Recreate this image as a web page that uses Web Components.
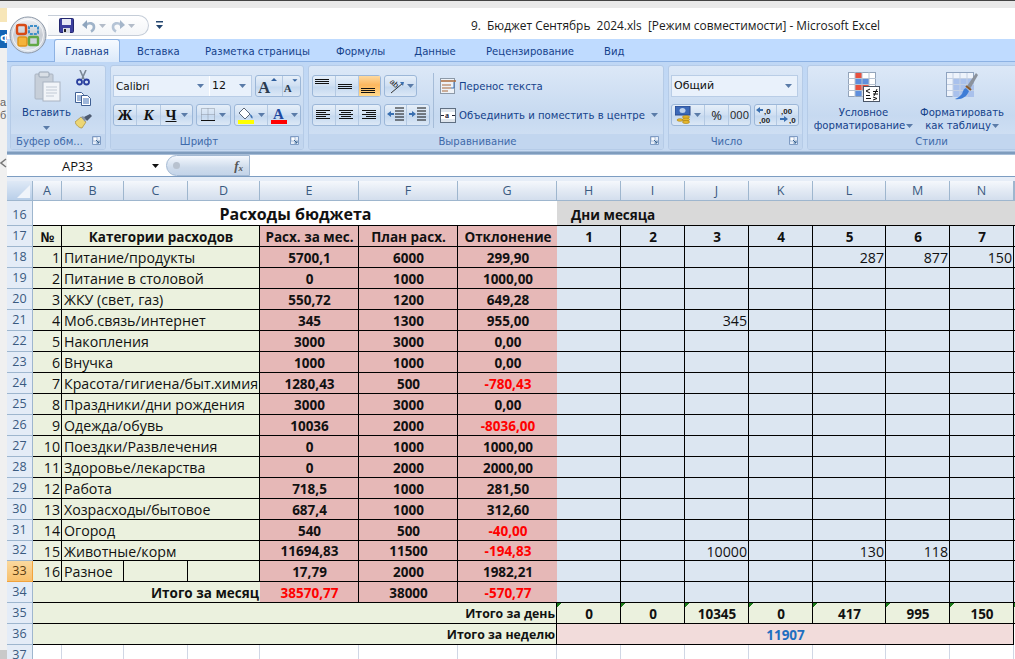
<!DOCTYPE html>
<html lang="ru">
<head>
<meta charset="utf-8">
<title>Excel</title>
<style>
  html, body { margin: 0; height: 100%; overflow: hidden; background: #efefef; }
</style>
</head>
<body>
<xl-app></xl-app>
<script>
const UI_FONT = '"DejaVu Sans", sans-serif';
const CELL_FONT = '"Open Sans", sans-serif';

const arrow = (c = '#5a7ba8') => `<svg width="7" height="4" viewBox="0 0 7 4"><path d="M0 0h7L3.5 4z" fill="${c}"/></svg>`;

// text alignment glyphs, rows = [x, width] at fixed y steps
const lines = (rows, y0, step, c = '#111') => `<svg width="18" height="16" viewBox="0 0 18 16">${rows.map((r, i) =>
  `<rect x="${r[0]}" y="${y0 + i * step}" width="${r[1]}" height="1" fill="${c}"/>`).join('')}</svg>`;

const curved = (stroke, head) => `<path d="M4 6C7 3 12 4 12 8c0 2-1 3.500-3 4.500" fill="none" stroke="${stroke}" stroke-width="2.600"/><path d="M5 1v9L0 6z" fill="${head}"/>`;

const icons = {
  save: `<svg width="15" height="15" viewBox="0 0 15 15"><rect x=".5" y=".5" width="14" height="14" rx="1" fill="#3b3f9e" stroke="#23276e"/><rect x="3" y="1" width="9" height="6" fill="#e6e9f5"/><rect x="4" y="10" width="7" height="5" fill="#d7dbe6"/><rect x="5" y="11" width="2" height="3" fill="#222"/></svg>`,
  undo: `<svg width="14" height="14" viewBox="0 0 14 14">${curved('#9fb3c9', '#8fa5be')}</svg>`,
  redo: `<svg width="14" height="14" viewBox="0 0 14 14"><g transform="matrix(-1 0 0 1 14 0)">${curved('#b5c4d6', '#a5b6ca')}</g></svg>`,
  qat: `<svg width="7" height="9" viewBox="0 0 7 9"><rect x="0" y="0" width="7" height="1.500" fill="#24466f"/><path d="M0 4h7L3.500 8z" fill="#24466f"/></svg>`,
  paste: `<svg width="27" height="31" viewBox="0 0 27 31"><rect x="1" y="3" width="18" height="25" rx="1" fill="#c7cfd9" stroke="#aab4c2"/><rect x="5" y="1" width="10" height="5" rx="1" fill="#d9dfe6" stroke="#9aa6b5"/><rect x="9" y="11" width="17" height="19" fill="#f1f4f8" stroke="#aab4c2"/><path d="M12 16h11M12 19h11M12 22h11M12 25h8" stroke="#c2cad5"/></svg>`,
  scissors: `<svg width="14" height="16" viewBox="0 0 14 16"><path d="M4 0l4 9M10 0L6 9" stroke="#7b8795" stroke-width="1.600"/><circle cx="3.500" cy="12" r="2.500" fill="none" stroke="#2a3f9e" stroke-width="1.800"/><circle cx="10.500" cy="12" r="2.500" fill="none" stroke="#2a3f9e" stroke-width="1.800"/></svg>`,
  copy: `<svg width="16" height="14" viewBox="0 0 16 14"><path d="M.5.500h6l2 2v8h-8z" fill="#fff" stroke="#3f5f93"/><path d="M6.500 3.500h6l3 3v7h-9z" fill="#fff" stroke="#3f5f93"/><path d="M2 4h4M2 6h4M2 8h4M8 7h6M8 9h6M8 11h6" stroke="#3f6fb5"/></svg>`,
  brush: `<svg width="17" height="15" viewBox="0 0 17 15"><path d="M0 8l6-5 5 5-4 6c-3 0-6-3-7-6z" fill="#ecd675" stroke="#a68a35" stroke-width=".7"/><path d="M6 3l2-1 3 3-1 3z" fill="#8b97a8"/><path d="M9 3l6-3 2 2-5 5z" fill="#4d5a70"/></svg>`,
  grow: `<svg width="22" height="18" viewBox="0 0 22 18"><text x="0" y="16" font-family="Liberation Serif" font-weight="700" font-size="17" fill="#2b3b4f">A</text><path d="M13 4l3-3 3 3z" fill="#2f5f9e"/></svg>`,
  shrink: `<svg width="20" height="18" viewBox="0 0 20 18"><text x="1" y="16" font-family="Liberation Serif" font-weight="700" font-size="13" fill="#2b3b4f">A</text><path d="M11 1h6l-3 3z" fill="#2f5f9e"/></svg>`,
  borders: `<svg width="14" height="14" viewBox="0 0 14 14"><path d="M.5 .5h13v12h-13zM7 .5v12M.5 6.500h13" fill="none" stroke="#8a94a3" stroke-dasharray="1 1"/><rect x="0" y="12" width="14" height="1" fill="#111"/></svg>`,
  fill: `<svg width="16" height="17" viewBox="0 0 16 17"><path d="M6 1l6 6-5 5-6-6z" fill="#fff" stroke="#5a6678"/><path d="M12 7c2 1 3 3 2.500 4.500-1 0-2.500-2-2.500-4.500z" fill="#3a6fb0"/><rect x="0" y="13" width="16" height="4" fill="#ffff00"/></svg>`,
  color: `<svg width="16" height="17" viewBox="0 0 16 17"><text x="2" y="12" font-family="Liberation Serif" font-weight="700" font-size="15" fill="#1f4aa0">A</text><rect x="0" y="13" width="16" height="4" fill="#ff0000"/></svg>`,
  orient: `<svg width="18" height="16" viewBox="0 0 18 16"><text transform="rotate(45 7 7)" x="1" y="9" font-family="Liberation Sans" font-size="8" fill="#222">ab</text><path d="M3 15L15 5" stroke="#333"/><path d="M12 4l4 0-1 4z" fill="#3a6fb0"/></svg>`,
  indentL: `<svg width="18" height="16" viewBox="0 0 18 16"><path d="M8 1h9M8 4h9M8 7h9M8 10h9M8 13h9" stroke="#111" fill="none"/><path d="M0 7l4-3v2h3v2H4v2z" fill="#3a6fb0"/></svg>`,
  indentR: `<svg width="18" height="16" viewBox="0 0 18 16"><path d="M8 1h9M8 4h9M8 7h9M8 10h9M8 13h9" stroke="#111" fill="none"/><path d="M7 7L3 4v2H0v2h3v2z" fill="#3a6fb0"/></svg>`,
  wrap: `<svg width="17" height="16" viewBox="0 0 17 16"><rect x=".5" y=".5" width="14" height="15" fill="#eef2f7" stroke="#8c99a8"/><path d="M1 3h15" stroke="#a8683a" stroke-width="1.500"/><path d="M2 7h9M2 10h9M2 13h6" stroke="#a8683a"/><path d="M14 4v6h-3" fill="none" stroke="#3a6fb0"/></svg>`,
  merge: `<svg width="16" height="15" viewBox="0 0 16 15"><rect x=".5" y=".5" width="15" height="14" fill="#dfe6ee" stroke="#5f6f82"/><rect x="1" y="4" width="14" height="7" fill="#fff"/><text x="5" y="10" font-family="Liberation Serif" font-weight="700" font-size="8" fill="#223">a</text><path d="M1 7.500h3M12 7.500h3" stroke="#223"/></svg>`,
  money: `<svg width="16" height="18" viewBox="0 0 16 18"><rect x="0" y="0" width="15" height="9" fill="#3c69b8" stroke="#28488a"/><ellipse cx="7.500" cy="4.500" rx="3" ry="2.500" fill="#bcd0ec"/><ellipse cx="11" cy="11" rx="3.500" ry="1.500" fill="#e8b92e" stroke="#a67d10" stroke-width=".6"/><ellipse cx="11" cy="13.500" rx="3.500" ry="1.500" fill="#e8b92e" stroke="#a67d10" stroke-width=".6"/><ellipse cx="11" cy="16" rx="3.500" ry="1.500" fill="#e8b92e" stroke="#a67d10" stroke-width=".6"/><ellipse cx="5" cy="14" rx="3" ry="1.300" fill="#e8b92e" stroke="#a67d10" stroke-width=".6"/></svg>`,
  decUp: `<svg width="19" height="18" viewBox="0 0 19 18"><path d="M0 4l4-3v2h3v2H4v2z" fill="#3a6fb0"/><text x="8" y="8" font-family="Liberation Sans" font-size="8" font-weight="700" fill="#222">,0</text><text x="3" y="17" font-family="Liberation Sans" font-size="8" font-weight="700" fill="#222">,00</text></svg>`,
  decDown: `<svg width="19" height="18" viewBox="0 0 19 18"><text x="3" y="8" font-family="Liberation Sans" font-size="8" font-weight="700" fill="#222">,00</text><path d="M9 13l-4-3v2H1v2h4v2z" transform="translate(1 0)" fill="#3a6fb0"/><text x="11" y="17" font-family="Liberation Sans" font-size="8" font-weight="700" fill="#222">,0</text></svg>`,
  launcher: `<svg width="9" height="9" viewBox="0 0 9 9"><path d="M.5 .5h8v8h-8z" fill="#e6eef9" stroke="#7f9cc4"/><path d="M1 1h4v4H1z" fill="#fff" stroke="#7f9cc4" stroke-width=".6"/><path d="M4 4l3 3M7 4.500V7H4.500" fill="none" stroke="#35608f"/></svg>`,
  condFormat: `<svg width="32" height="30" viewBox="0 0 32 30"><rect x=".5" y=".5" width="27" height="24" fill="#fff" stroke="#93a4ba"/><rect x="7" y="1" width="7" height="6" fill="#e8513f"/><rect x="7" y="7" width="14" height="6" fill="#5f8fdd"/><rect x="7" y="13" width="14" height="6" fill="#e8513f"/><rect x="7" y="19" width="7" height="5" fill="#5f8fdd"/><path d="M7 0v25M14 0v25M21 0v25M0 6.500h28M0 12.500h28M0 18.500h28" stroke="#b6c2d2" fill="none"/><rect x="15.500" y="14.500" width="16" height="15" fill="#fff" stroke="#4a5566"/><path d="M22 17l-4 2 4 2M18 23.500h4M18 26.500h5M25 19.500h5M25 22h5M29 17l-3 7M25 25l4 1.500-4 1.500" stroke="#111" fill="none"/></svg>`,
  tableFormat: `<svg width="32" height="30" viewBox="0 0 32 30"><rect x=".5" y=".5" width="27" height="24" fill="#eef3fb" stroke="#8fa3bf"/><rect x="7" y="7" width="21" height="18" fill="#a9c1ec"/><path d="M7 1v24M14 1v24M21 1v24M1 6.500h27M1 12.500h27M1 18.500h27" stroke="#c3d0e4" fill="none"/><path d="M30 1L21 14l3 3L32 3z" fill="#8b929c"/><path d="M20 16c-3 1-3 4-4 6-2 2-4 4-7 5 6 1 12-2 14-8z" fill="#3f7dd6"/><path d="M20 14l5 4" stroke="#8a5a2b" stroke-width="2.200"/></svg>`,
  cellStyle: `<svg width="32" height="30" viewBox="0 0 32 30"><rect x=".5" y=".5" width="27" height="24" fill="#fff" stroke="#93a4ba"/></svg>`
};

const orb = `<svg width="38" height="38" viewBox="0 0 38 38">
  <defs>
    <linearGradient id="o" x1="0" y1="0" x2="0" y2="1"><stop offset="0" stop-color="#f4f5f7"/><stop offset=".5" stop-color="#c8ccd3"/><stop offset="1" stop-color="#dfe6ef"/></linearGradient>
  </defs>
  <circle cx="19" cy="19" r="18" fill="url(#o)" stroke="#8a96a6"/>
  <circle cx="19" cy="19" r="15.500" fill="none" stroke="#fff" stroke-opacity=".7"/>
  <rect x="8" y="9" width="9" height="9" rx="2" fill="none" stroke="#d84a14" stroke-width="2.400"/>
  <rect x="20" y="10" width="9" height="8" rx="1" fill="none" stroke="#3f8fc9" stroke-width="2" stroke-dasharray="3 1"/>
  <rect x="9" y="21" width="9" height="9" rx="2" fill="#f4b33a" stroke="#e0941a" stroke-width="1.500"/>
  <rect x="20" y="21" width="9" height="8" rx="1" fill="none" stroke="#62a845" stroke-width="2.400"/>
</svg>`;

// row data: num, name, month, plan, diff, {col: value}
const ROWS = [
  [1, 'Питание/продукты', '5700,1', '6000', '299,90', { L: 287, M: 877, N: 150 }],
  [2, 'Питание в столовой', '0', '1000', '1000,00'],
  [3, 'ЖКУ (свет, газ)', '550,72', '1200', '649,28'],
  [4, 'Моб.связь/интернет', '345', '1300', '955,00', { J: 345 }],
  [5, 'Накопления', '3000', '3000', '0,00'],
  [6, 'Внучка', '1000', '1000', '0,00'],
  [7, 'Красота/гигиена/быт.химия', '1280,43', '500', '-780,43'],
  [8, 'Праздники/дни рождения', '3000', '3000', '0,00'],
  [9, 'Одежда/обувь', '10036', '2000', '-8036,00'],
  [10, 'Поездки/Развлечения', '0', '1000', '1000,00'],
  [11, 'Здоровье/лекарства', '0', '2000', '2000,00'],
  [12, 'Работа', '718,5', '1000', '281,50'],
  [13, 'Хозрасходы/бытовое', '687,4', '1000', '312,60'],
  [14, 'Огород', '540', '500', '-40,00'],
  [15, 'Животные/корм', '11694,83', '11500', '-194,83', { J: 10000, L: 130, M: 118 }],
  [16, 'Разное', '17,79', '2000', '1982,21']
];
const DAY_COLS = ['H', 'I', 'J', 'K', 'L', 'M', 'N'];
const ALL_COLS = ['A', 'B', 'C', 'D', 'E', 'F', 'G', ...DAY_COLS];

class XlStrip extends HTMLElement {
  connectedCallback() {
    this.attachShadow({ mode: 'open' }).innerHTML = `
      <style>
        :host { display: flex; flex-direction: column; width: 7px; flex: none; overflow: hidden; background: #f0f0f0;
          font: 13px "Liberation Sans", sans-serif; color: #555; }
        .orange { height: 14px; flex: none; background: #f7e6b8; }
        .white { height: 8px; flex: none; background: #fff; }
        .blue { height: 18px; flex: none; background: #1464b4; color: #fff; font-weight: 700; line-height: 18px; }
        .gap { height: 48px; flex: none; }
        .t { height: 13px; flex: none; line-height: 13px; font-size: 11px; color: #666; }
        .back { height: 10px; flex: none; margin-top: 36px; display: flex; }
        .fill { flex: 1; }
        .base { height: 9px; flex: none; background: #c9c9c9; }
      </style>
      <div class="orange"></div><div class="white"></div><div class="blue">Ф</div><div class="gap"></div>
      <div class="t">а</div><div class="t">б</div>
      <div class="back"><svg width="7" height="10" viewBox="0 0 7 10"><path d="M6 1L1 5l5 4" fill="none" stroke="#777" stroke-width="1.500"/></svg></div>
      <div class="fill"></div><div class="base"></div>
    `;
  }
}

class XlTitlebar extends HTMLElement {
  connectedCallback() {
    this.attachShadow({ mode: 'open' }).innerHTML = `
      <style>
        :host { display: flex; height: 31px; background: #fff; align-items: center; flex: none; }
        .qat { display: flex; align-items: center; margin-left: 41px; width: 101px; height: 21px; box-sizing: border-box;
          padding-left: 11px; margin-top: 4px; border: 1px solid #c5cdd8; border-left: 0; border-radius: 0 11px 11px 0;
          background: linear-gradient(#fff, #f3f5f8); flex: none; }
        .qat svg { flex: none; }
        .u { margin-left: 8px; display: flex; }
        .a { margin-left: 3px; margin-right: 5px; display: flex; }
        .cust { margin-left: 7px; margin-top: 4px; display: flex; }
        .title { margin-left: 308px; font: 11.900px/16px ${CELL_FONT}; color: #1a1a1a; white-space: pre; margin-top: 2px; }
      </style>
      <div class="qat">${icons.save}<span class="u">${icons.undo}</span><span class="a">${arrow('#b3bcc9')}</span>${icons.redo}<span class="a">${arrow('#b3bcc9')}</span></div>
      <div class="cust">${icons.qat}</div>
      <div class="title">9.  Бюджет Сентябрь  2024.xls  [Режим совместимости] - Microsoft Excel</div>
    `;
  }
}

class XlTabs extends HTMLElement {
  connectedCallback() {
    const tabs = [['Главная', 1, 66], ['Вставка', 0, 39], ['Разметка страницы', 0, 102], ['Формулы', 0, 49], ['Данные', 0, 42], ['Рецензирование', 0, 90], ['Вид', 0, 19]];
    this.attachShadow({ mode: 'open' }).innerHTML = `
      <style>
        :host { display: flex; height: 23px; background: #bfdbff; flex: none; padding-left: 47px; box-sizing: border-box;
          font: 10.100px/19px ${UI_FONT}; color: #15428b; border-bottom: 1px solid #8db2e3; }
        .tab { white-space: nowrap; text-align: center; flex: none; margin-right: 29px; padding-top: 3px; box-sizing: border-box; }
        .tab.on { height: 23px; padding-top: 2px; margin-right: 17px; border: 1px solid #8db2e3; border-bottom: 0;
          border-radius: 3px 3px 0 0; background: linear-gradient(#f6faff, #dbe9fa); position: relative; }
      </style>
      ${tabs.map(t => `<div class="tab${t[1] ? ' on' : ''}" style="width:${t[2]}px">${t[0]}</div>`).join('')}
    `;
  }
}

class XlGroup extends HTMLElement {
  connectedCallback() {
    const launcher = this.hasAttribute('launcher');
    const shift = this.getAttribute('label-pad') || '0';
    this.attachShadow({ mode: 'open' }).innerHTML = `
      <style>
        :host { display: flex; flex-direction: column; flex: none; box-sizing: border-box; height: 85px; border: 1px solid #b5cbe7;
          border-radius: 3px; overflow: hidden; background: linear-gradient(#dce8f7, #c6d9f0 60%, #d5e3f5); }
        .body { flex: 1; min-height: 0; display: flex; }
        .label { height: 15px; flex: none; box-sizing: border-box; display: flex; align-items: center; justify-content: center; position: relative;
          background: #c2d6ef; font: 10.100px/14px ${UI_FONT}; color: #3e6aaa; padding-right: ${shift}px; padding-top: 1px; }
        .launch { position: absolute; right: 4px; top: 2px; display: flex; }
      </style>
      <div class="body"><slot></slot></div>
      <div class="label"><span>${this.getAttribute('label')}</span>${launcher ? `<span class="launch">${icons.launcher}</span>` : ''}</div>
    `;
  }
}

class XlBtns extends HTMLElement {
  connectedCallback() {
    this.attachShadow({ mode: 'open' }).innerHTML = `
      <style>
        :host { display: inline-flex; height: 22px; box-sizing: border-box; flex: none; border: 1px solid #9cb7d8; border-radius: 3px;
          background: linear-gradient(#e6eff9, #cfdff2 50%, #c4d8ef 55%, #dce8f6); }
        ::slotted(*) { display: flex; align-items: center; justify-content: center; height: 100%; box-sizing: border-box;
          flex: none; border-right: 1px solid #b4c9e2; }
        ::slotted(*:last-child) { border-right: 0; }
      </style>
      <slot></slot>
    `;
  }
}

class XlCombo extends HTMLElement {
  connectedCallback() {
    this.attachShadow({ mode: 'open' }).innerHTML = `
      <style>
        :host { display: flex; height: 22px; box-sizing: border-box; align-items: center; justify-content: space-between; flex: none;
          background: #e9f1fb; padding: 0 5px 0 2px; font: 11px/20px ${UI_FONT}; color: #111; }
      </style>
      <span><slot></slot></span>${arrow()}
    `;
  }
}

class XlRibbon extends HTMLElement {
  connectedCallback() {
    this.attachShadow({ mode: 'open' }).innerHTML = `
      <style>
        :host { display: flex; gap: 4px; height: 93px; flex: none; box-sizing: border-box; padding: 3px 0 0 3px; overflow: hidden;
          background: linear-gradient(#bfd7f5 0, #c9dcf3 85px, #c6d9f1 89px, #7f9cbd 90px, #7f9cbd 92px, #cfdff2 93px);
          font: 10.100px/13px ${UI_FONT}; color: #15428b; }
        .rows { display: flex; flex-direction: column; gap: 7px; padding: 9px 0 0 2px; }
        .row { display: flex; gap: 3px; height: 22px; }
        .ic { display: flex; align-items: center; justify-content: center; }
        .clip { display: flex; width: 100%; padding: 4px 0 0 11px; box-sizing: border-box; }
        .paste { width: 49px; text-align: center; color: #15428b; margin-right: 3px; flex: none; }
        .paste .ic { height: 32px; padding-left: 2px; }
        .paste .ar { margin-top: 7px; display: flex; justify-content: center; }
        .small { display: flex; flex-direction: column; gap: 6px; }
        .small span { display: flex; justify-content: center; width: 18px; height: 16px; }
        .ser { font: 700 15px/20px "Liberation Serif", serif; color: #111; }
        .on { background: linear-gradient(#fdd9a0, #fcb75f 45%, #ffd98c) !important; }
        .al { display: flex; padding: 9px 0 0 2px; }
        .sep { width: 1px; height: 55px; margin: -2px 6px 0 6px; background: #a5bcd8; flex: none; }
        .link { display: flex; align-items: center; gap: 2px; height: 22px; white-space: nowrap; }
        .link .ar { margin-left: 4px; display: flex; }
        .cbox { display: flex; border: 1px solid #b9cde6; width: max-content; height: 22px; box-sizing: border-box; }
        .cbox xl-combo { height: 20px; }
        .big { display: flex; flex-direction: column; align-items: center; flex: none; text-align: center; white-space: nowrap; padding-top: 6px; }
        .big svg { display: block; margin-bottom: 4px; }
        .big .ar { display: inline-flex; vertical-align: middle; margin-left: 1px; }
        .big .ar svg { margin: 0; }
        .pct { font: 13px/20px ${CELL_FONT}; color: #222; }
      </style>
      <xl-group style="width:96px" label="Буфер обм..." launcher label-pad="17">
        <div class="clip">
          <div class="paste"><div class="ic">${icons.paste}</div><div style="margin-top:4px">Вставить</div><div class="ar">${arrow()}</div></div>
          <div class="small"><span>${icons.scissors}</span><span>${icons.copy}</span><span>${icons.brush}</span></div>
        </div>
      </xl-group>
      <xl-group style="width:194px" label="Шрифт" launcher label-pad="16">
        <div class="rows">
          <div class="row">
            <div class="cbox" style="gap:1px;background:#fff">
              <xl-combo style="width:95px;font-size:10.500px">Calibri</xl-combo><xl-combo style="width:41px">12</xl-combo>
            </div>
            <xl-btns><div class="ic" style="width:27px">${icons.grow}</div><div class="ic" style="width:17px">${icons.shrink}</div></xl-btns>
          </div>
          <div class="row">
            <xl-btns><div class="ser" style="width:23px">Ж</div><div class="ser" style="width:24px;font-style:italic">К</div><div class="ser" style="width:31px;gap:4px"><span style="text-decoration:underline">Ч</span>${arrow()}</div></xl-btns>
            <xl-btns><div style="width:33px;gap:4px">${icons.borders}${arrow()}</div></xl-btns>
            <xl-btns><div style="width:33px;gap:4px">${icons.fill}${arrow()}</div><div style="width:32px;gap:4px">${icons.color}${arrow()}</div></xl-btns>
          </div>
        </div>
      </xl-group>
      <xl-group style="width:356px" label="Выравнивание" launcher label-pad="17">
        <div class="al">
          <div class="rows" style="padding:0 0 0 1px">
            <div class="row">
              <xl-btns><div style="width:23px">${lines([[0, 14], [0, 14], [0, 14]], 1, 2)}</div><div style="width:23px">${lines([[0, 14], [0, 14], [0, 14]], 6, 2)}</div><div class="on" style="width:21px">${lines([[0, 14], [0, 14], [0, 14]], 10, 2)}</div></xl-btns>
              <xl-btns><div style="width:31px;gap:1px">${icons.orient}${arrow()}</div></xl-btns>
            </div>
            <div class="row">
              <xl-btns><div style="width:23px">${lines([[1, 14], [1, 10], [1, 14], [1, 10], [1, 14]], 3, 2)}</div><div style="width:23px">${lines([[1, 14], [3, 10], [1, 14], [3, 10], [1, 14]], 3, 2)}</div><div style="width:21px">${lines([[1, 14], [5, 10], [1, 14], [5, 10], [1, 14]], 3, 2)}</div></xl-btns>
              <xl-btns><div style="width:22px">${icons.indentL}</div><div style="width:22px">${icons.indentR}</div></xl-btns>
            </div>
          </div>
          <div class="sep" style="margin-left:3px"></div>
          <div class="rows" style="padding:0">
            <div class="link">${icons.wrap}<span>Перенос текста</span></div>
            <div class="link">${icons.merge}<span style="margin-left:1px">Объединить и поместить в центре</span><span class="ar">${arrow()}</span></div>
          </div>
        </div>
      </xl-group>
      <xl-group style="width:135px" label="Число" launcher label-pad="18">
        <div class="rows">
          <div class="row"><div class="cbox" style="width:127px"><xl-combo style="width:125px">Общий</xl-combo></div></div>
          <div class="row">
            <xl-btns><div style="width:33px;gap:3px">${icons.money}${arrow()}</div><div class="pct" style="width:24px">%</div><div class="pct" style="width:21px;font-size:11px">000</div></xl-btns>
            <xl-btns><div style="width:22px">${icons.decUp}</div><div style="width:21px">${icons.decDown}</div></xl-btns>
          </div>
        </div>
      </xl-group>
      <xl-group style="width:249px" label="Стили">
        <div style="display:flex;padding-left:5px">
          <div class="big" style="width:101px">${icons.condFormat}<div>Условное<br>форматирование<span class="ar">${arrow()}</span></div></div>
          <div class="big" style="width:96px">${icons.tableFormat}<div>Форматировать<br>как таблицу<span class="ar">${arrow()}</span></div></div>
          <div class="big" style="width:46px">${icons.cellStyle}<div>Стили<br>ячеек</div></div>
        </div>
      </xl-group>
    `;
  }
}

class XlFormula extends HTMLElement {
  connectedCallback() {
    this.attachShadow({ mode: 'open' }).innerHTML = `
      <style>
        :host { display: flex; height: 22px; flex: none; box-sizing: border-box; background: #fff; border-bottom: 1px solid #7d9dc2; }
        .name { width: 159px; flex: none; height: 21px; display: flex; align-items: center; font: 13px ${CELL_FONT}; color: #111; padding-left: 55px; box-sizing: border-box; }
        .name svg { margin-left: 59px; }
        .pill { width: 84px; height: 21px; flex: none; box-sizing: border-box; border: 1px solid #a3b9d3; border-radius: 11px 0 0 11px;
          background: linear-gradient(#f4f8fd, #cfdcec 60%, #c4d4e9); display: flex; align-items: center; justify-content: space-between; padding: 0 6px 0 6px; }
        .dot { width: 7px; height: 7px; border-radius: 50%; background: #b8c2cf; }
        .fx { font: italic 700 13px "Liberation Serif", serif; color: #555; }
      </style>
      <div class="name"><span>AP33</span>${arrow('#111')}</div>
      <div class="pill"><span class="dot"></span><span class="fx">f<sub style="font-size:9px;vertical-align:-1px">x</sub></span></div>
    `;
  }
}

class XlSheet extends HTMLElement {
  connectedCallback() {
    let html = '';
    const rowHead = (n, extra = '') => `<div class="rh${extra}">${n}</div>`;
    const day = (v, cls) => `<div class="c ${cls}">${v === undefined ? '' : v}</div>`;

    // column letters
    html += '<div class="corner"><i></i></div>';
    for (const col of ALL_COLS) html += `<div class="ch">${col}</div>`;
    html += '<div class="ch"></div>';

    html += rowHead(16);
    html += '<div class="c title kb" style="grid-column:span 7">Расходы бюджета</div>';
    html += '<div class="c gray b kb" style="grid-column:span 8">Дни месяца</div>';

    html += rowHead(17);
    html += '<div class="c gr b m k">№</div>';
    html += '<div class="c gr b m k" style="grid-column:span 3">Категории расходов</div>';
    html += '<div class="c pk b m k">Расх. за мес.</div><div class="c pk b m k">План расх.</div><div class="c pk b m kb">Отклонение</div>';
    for (let d = 1; d <= 7; d++) html += `<div class="c bl b m k">${d}</div>`;
    html += '<div class="c bl kb"></div>';

    ROWS.forEach((r, i) => {
      const rowNo = 18 + i;
      html += rowHead(rowNo, rowNo === 33 ? ' sel' : '');
      html += `<div class="c gr r k">${r[0]}</div>`;
      if (rowNo === 33) {
        html += `<div class="c gr l k">${r[1]}</div><div class="c gr k"></div><div class="c gr k"></div>`;
      } else {
        html += `<div class="c gr l k" style="grid-column:span 3">${r[1]}</div>`;
      }
      html += `<div class="c pk b m k">${r[2]}</div><div class="c pk b m k">${r[3]}</div>`;
      html += `<div class="c pk b m kb${r[4][0] === '-' ? ' red' : ''}">${r[4]}</div>`;
      for (const col of DAY_COLS) html += day(r[5] && r[5][col], 'bl r k');
      html += day(undefined, 'bl kb');
    });

    html += rowHead(34);
    html += '<div class="c gr b r kb" style="grid-column:span 4">Итого за месяц</div>';
    html += '<div class="c pk b m k red">38570,77</div><div class="c pk b m k">38000</div><div class="c pk b m kb red">-570,77</div>';
    for (let d = 0; d < 7; d++) html += day(undefined, 'bl k');
    html += day(undefined, 'bl kb');

    html += rowHead(35);
    html += '<div class="c gr b r k sm" style="grid-column:span 7">Итого за день</div>';
    for (const v of [0, 0, 10345, 0, 417, 995, 150]) html += `<div class="c gr b m k tri">${v}</div>`;
    html += '<div class="c gr kb tri"></div>';

    html += rowHead(36);
    html += '<div class="c gr b r k sm" style="grid-column:span 7">Итого за неделю</div>';
    html += '<div class="c rose b m k blue" style="grid-column:span 7">11907</div><div class="c"></div>';

    html += rowHead(37);
    for (let i = 0; i < 15; i++) html += '<div class="c e"></div>';

    this.attachShadow({ mode: 'open' }).innerHTML = `
      <style>
        :host { display: block; flex: 1; min-height: 0; overflow: hidden; background: #fff; border-top: 4px solid #e6edf7; }
        .grid { display: grid; font: 14.200px ${CELL_FONT}; color: #111;
          grid-template-columns: 26px 29px 62px 64px 72px 99px 99px 99px 64px 64px 64px 64px 73px 64px 64px 1px;
          grid-template-rows: 20px 25px 21px repeat(14, 21px) 20px 21px 21px 21px 21px 21px; }
        .corner { background: linear-gradient(#dfe9f6, #b9cfe9); border-right: 1px solid #9eb6ce; border-bottom: 1px solid #9eb6ce; position: relative; overflow: hidden; }
        .corner i { position: absolute; right: 2px; bottom: 2px; width: 0; height: 0; border-left: 13px solid transparent; border-bottom: 13px solid #f0f4fa; }
        .ch { display: flex; align-items: center; justify-content: center; background: linear-gradient(#f5f8fc, #e3eaf4 50%, #d3deed);
          border-right: 1px solid #9eb6ce; border-bottom: 1px solid #9eb6ce; color: #3a5a80; font-size: 12.500px; overflow: hidden; }
        .rh { display: flex; align-items: flex-end; justify-content: center; background: #e4ecf7; border-right: 1px solid #9eb6ce;
          border-bottom: 1px solid #9eb6ce; color: #3a5a80; font-size: 12.500px; line-height: 20px; }
        .rh.sel { background: linear-gradient(#fad99e, #f8c06c); border-color: #f2a33c; color: #5b3d12; }
        .c { display: flex; align-items: center; box-sizing: border-box; min-width: 0; white-space: nowrap; overflow: hidden; padding: 1px 1px 0 2px; line-height: 19px; }
        .title { justify-content: center; font-weight: 700; font-size: 16px; background: #fff; padding-top: 3px; }
        .gray { background: #d9d9d9; padding-left: 14px; }
        .gr { background: #ebf1de; }
        .pk { background: #e6b8b7; }
        .bl { background: #dce6f1; }
        .rose { background: #f2dcdb; }
        .b { font-weight: 700; font-size: 13.500px; padding-top: 2px; }
        .gray.b { padding-top: 4px; }
        .m { justify-content: center; }
        .r { justify-content: flex-end; }
        .k { border-right: 1px solid #000; border-bottom: 1px solid #000; }
        .kb { border-bottom: 1px solid #000; }
        .b.sm { font-size: 12.300px; padding-top: 1px; }
        .red { color: #ff0000; }
        .blue { color: #1f6fc0; }
        .tri { background-image: linear-gradient(135deg, #1a7a1a 3.500px, transparent 3.500px); }
        .e { border-right: 1px solid #d0d7e5; }
      </style>
      <div class="grid">${html}</div>
    `;
  }
}

class XlApp extends HTMLElement {
  connectedCallback() {
    this.attachShadow({ mode: 'open' }).innerHTML = `
      <style>
        :host { display: block; height: 659px; width: 1015px; overflow: hidden; background: #e9e9e9; }
        .top { height: 8px; box-sizing: border-box; border-top: 1px solid #444; background: #e9e9e9; }
        .main { display: flex; height: 651px; }
        .win { position: relative; flex: 1; min-width: 0; display: flex; flex-direction: column; background: #fff; }
        .orb { position: absolute; left: 2px; top: 8px; width: 38px; height: 38px; }
      </style>
      <div class="top"></div>
      <div class="main">
        <xl-strip></xl-strip>
        <div class="win">
          <xl-titlebar></xl-titlebar>
          <xl-tabs></xl-tabs>
          <xl-ribbon></xl-ribbon>
          <xl-formula></xl-formula>
          <xl-sheet></xl-sheet>
          <div class="orb">${orb}</div>
        </div>
      </div>
    `;
  }
}

customElements.define('xl-strip', XlStrip);
customElements.define('xl-titlebar', XlTitlebar);
customElements.define('xl-tabs', XlTabs);
customElements.define('xl-group', XlGroup);
customElements.define('xl-btns', XlBtns);
customElements.define('xl-combo', XlCombo);
customElements.define('xl-ribbon', XlRibbon);
customElements.define('xl-formula', XlFormula);
customElements.define('xl-sheet', XlSheet);
customElements.define('xl-app', XlApp);
</script>
</body>
</html>
